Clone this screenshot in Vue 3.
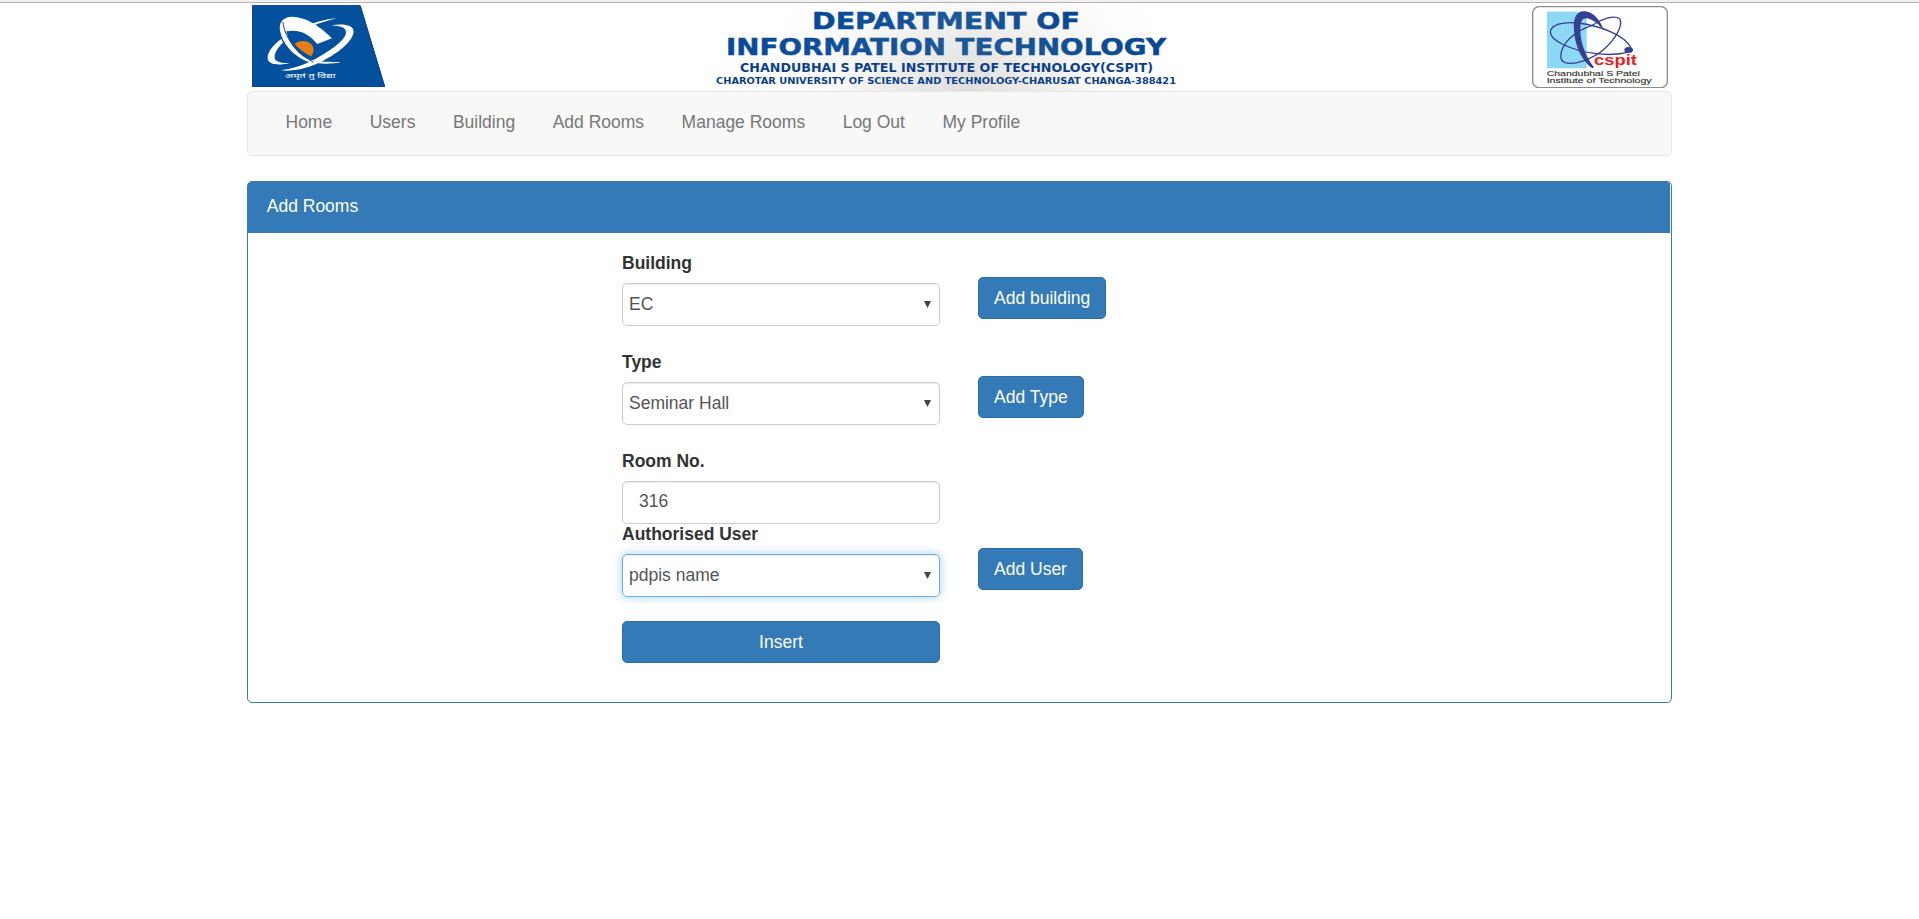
<script setup>
import { ref } from 'vue'

const links = ['Home', 'Users', 'Building', 'Add Rooms', 'Manage Rooms', 'Log Out', 'My Profile']

const fields = [
  { key: 'building', label: 'Building', kind: 'select', value: 'EC', action: 'Add building' },
  { key: 'type', label: 'Type', kind: 'select', value: 'Seminar Hall', action: 'Add Type' },
  { key: 'room', label: 'Room No.', kind: 'text', value: '316', action: '' },
  { key: 'user', label: 'Authorised User', kind: 'select', value: 'pdpis name', action: 'Add User' },
]
const active = ref('user')
</script>

<template>
  <div class="page">
    <div class="strip"></div>
    <div class="container">
      <header class="banner">
        <svg class="logo-left" viewBox="36 15 400 247">
          <path d="M36 15H361L436 262H36Z" fill="#03519c" />
          <path d="M36 16V260H434L361 17" fill="none" stroke="#1b3f8c" stroke-width="3" />
          <g fill="#fff">
            <path d="M120 92C116 66 130 50 157 50C196 50 240 78 276 115L232 132C208 103 180 86 139 94C145 130 180 172 214 181C240 187 270 185 303 187C270 194 228 192 200 184C160 166 128 133 120 92Z" />
            <path d="M291 54C250 58 209 72 178 87L186 92C218 76 252 64 291 54Z" />
            <path d="M124 117C96 136 78 163 84 181C92 196 122 196 149 189C124 190 105 185 104 173C103 160 113 142 129 128Z" />
            <path d="M275 76C310 70 342 75 341 96C337 132 265 182 202 202C175 210 148 214 122 211C160 206 193 194 226 177C275 151 318 119 318 97C318 82 302 79 275 76Z" />
          </g>
          <path d="M164 132C174 122 196 119 211 130C223 140 224 157 213 169C194 160 178 148 164 132Z" fill="#e77b17" />
          <path d="M129 66C132 104 159 151 220 187" fill="none" stroke="#1b3f8c" stroke-width="3" />
          <text class="motto" x="135" y="233" textLength="152" lengthAdjust="spacingAndGlyphs">अमृतं तु विद्या</text>
        </svg>

        <svg class="title" viewBox="700 3 500 88">
          <defs>
            <linearGradient id="sheen" x1="0" x2="1">
              <stop offset="0" stop-color="#fff" stop-opacity="0" />
              <stop offset=".32" stop-color="#eeefed" />
              <stop offset=".52" stop-color="#dfe0de" />
              <stop offset=".72" stop-color="#f0efed" />
              <stop offset="1" stop-color="#fff" stop-opacity="0" />
            </linearGradient>
            <linearGradient id="light" x1="0" y1="0" x2=".25" y2="1">
              <stop offset="0" stop-color="#fff" stop-opacity=".95" />
              <stop offset=".45" stop-color="#fff" stop-opacity=".35" />
              <stop offset="1" stop-color="#fff" stop-opacity="0" />
            </linearGradient>
            <linearGradient id="ink" x1="0" x2="1">
              <stop offset="0" stop-color="#06489a" />
              <stop offset=".55" stop-color="#1c5998" />
              <stop offset="1" stop-color="#064694" />
            </linearGradient>
          </defs>
          <rect x="745" y="3" width="430" height="88" fill="url(#sheen)" />
          <rect x="745" y="3" width="430" height="88" fill="url(#light)" />
          <g class="big">
            <text x="812" y="29" textLength="268" lengthAdjust="spacingAndGlyphs">DEPARTMENT OF</text>
            <text x="726" y="54.5" textLength="440" lengthAdjust="spacingAndGlyphs">INFORMATION TECHNOLOGY</text>
          </g>
          <text class="mid" x="740" y="72" textLength="413" lengthAdjust="spacingAndGlyphs">CHANDUBHAI S PATEL INSTITUTE OF TECHNOLOGY(CSPIT)</text>
          <text class="low" x="716" y="84" textLength="460" lengthAdjust="spacingAndGlyphs">CHAROTAR UNIVERSITY OF SCIENCE AND TECHNOLOGY-CHARUSAT CHANGA-388421</text>
        </svg>

        <svg class="logo-right" viewBox="33 17 408 247">
          <rect x="35" y="19" width="404" height="243" rx="19" fill="#fff" stroke="#8b8b8b" stroke-width="4" />
          <rect x="78" y="34" width="119" height="170" fill="#8dd8f4" />
          <g fill="none" stroke="#343e92" stroke-width="4">
            <path d="M330 142C310 104 238 76 170 68C124 63 91 74 88 94C87 120 150 151 225 160C272 166 318 160 326 150" />
            <path d="M214 75C240 56 280 43 296 55C307 73 286 113 250 146C214 178 158 195 132 187C111 178 117 145 145 115C168 94 190 82 214 75Z" />
          </g>
          <path d="M248 90C235 50 211 33 187 33C163 34 156 59 159 92C162 138 184 184 214 204L219 201C189 161 177 120 178 82C179 60 185 52 199 54C218 58 234 73 248 90Z" fill="#343e92" />
          <ellipse cx="323" cy="149" rx="13" ry="9" fill="#343e92" />
          <text class="mark" x="219" y="193" textLength="129" lengthAdjust="spacingAndGlyphs">cspit</text>
          <g class="caption">
            <text x="77" y="228" textLength="280" lengthAdjust="spacingAndGlyphs">Chandubhai S Patel</text>
            <text x="77" y="248" textLength="315" lengthAdjust="spacingAndGlyphs">Institute of Technology</text>
          </g>
        </svg>
      </header>

      <nav class="navbar">
        <a v-for="link in links" :key="link">{{ link }}</a>
      </nav>

      <section class="panel">
        <div class="panel-heading">Add Rooms</div>
        <form class="panel-body" @submit.prevent>
          <div v-for="f in fields" :key="f.key" class="row" :class="f.key">
            <div class="field">
              <label>{{ f.label }}</label>
              <div class="control" :class="[f.kind, { focused: active === f.key }]">
                <span>{{ f.value }}</span>
                <svg v-if="f.kind === 'select'" class="arrow" viewBox="0 0 7 7"><path d="M0 0H7L3.5 7Z" /></svg>
              </div>
            </div>
            <button v-if="f.action" type="button" class="btn">{{ f.action }}</button>
          </div>
          <button type="submit" class="btn insert">Insert</button>
        </form>
      </section>
    </div>
  </div>
</template>

<style>
body { background: #fff; }
</style>

<style scoped>
* { box-sizing: border-box; }
.page {
  height: 919px;
  overflow: hidden;
  font-family: "Liberation Sans", Arial, sans-serif;
  font-size: 17.5px;
  line-height: 25px;
  color: #333;
}
.strip { height: 3px; background: #f1f1f1; border-bottom: 1px solid #b2b2b2; }
.container { width: 1425px; margin: 0 auto; }
.banner {
  display: grid;
  grid-template-columns: 453px 500px 1fr;
  height: 88px;
  padding: 2px 4px 0 5px;
}
.logo-left { width: 133.3px; height: 82.3px; }
.title { width: 500px; height: 88px; margin: -2px 0 0 -5px; }
.logo-right { width: 136px; height: 82.3px; justify-self: end; margin-top: 1px; }
.motto { font: 20px "Noto Sans Devanagari", "Noto Sans", sans-serif; fill: #fff; }
.big, .mid, .low { font-family: "DejaVu Sans", sans-serif; font-weight: bold; }
.big { font-size: 23.5px; fill: url(#ink); stroke: url(#ink); stroke-width: .5; }
.mid { font-size: 11.4px; fill: #0c3f8b; }
.low { font-size: 8.8px; fill: #0c3f8b; }
.mark { font: bold 44px "Liberation Sans", sans-serif; fill: #ed1c24; }
.caption { font: 21px "Liberation Sans", sans-serif; fill: #333; stroke: #333; stroke-width: .4; }
.navbar {
  display: flex;
  height: 65px;
  padding: 18px 18.75px 0;
  background: #f8f8f8;
  border: 1px solid #e7e7e7;
  border-radius: 5px;
  color: #777;
}
.navbar a { padding: 0 18.75px; white-space: nowrap; }
.panel {
  height: 522px;
  margin-top: 25px;
  border: 1px solid #337ab7;
  border-radius: 5px;
  background: #fff;
}
.panel-heading {
  height: 51px;
  margin-right: 1px;
  padding: 11.5px 18.75px;
  background: #337ab7;
  border-radius: 3px 3px 0 0;
  color: #fff;
}
.panel-body { padding: 18px 0 0 374px; }
.row { display: flex; gap: 38px; height: 99px; }
.row.room { height: 73px; }
.row.user { height: 99px; }
.field { width: 318px; }
label { display: block; height: 32px; font-weight: bold; }
.control {
  display: flex;
  align-items: center;
  justify-content: space-between;
  height: 43px;
  padding: 0 8px 0 6px;
  border: 1px solid #ccc;
  border-radius: 5px;
  color: #555;
  box-shadow: inset 0 1px 1px rgba(0, 0, 0, .075);
}
.control.text { padding: 0 16px 3px; }
.control.focused {
  border-color: #66afe9;
  box-shadow: inset 0 1px 1px rgba(0, 0, 0, .075), 0 0 10px rgba(102, 175, 233, .6);
}
.arrow { width: 7px; height: 7px; fill: #444; }
.btn {
  height: 42px;
  margin-top: 26px;
  padding: 0 15px;
  border: 1px solid #2e6da4;
  border-radius: 5px;
  background: #337ab7;
  color: #fff;
  font: inherit;
}
.insert { display: block; width: 318px; margin-top: 0; }
</style>
